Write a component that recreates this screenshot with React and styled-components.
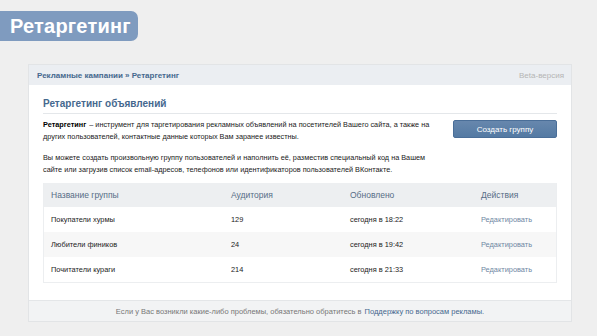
import React from 'react';
import styled, { createGlobalStyle } from 'styled-components';

const Global = createGlobalStyle`
  html, body { margin: 0; padding: 0; }
  body {
    background: #efefef;
    font-family: "Liberation Sans", Arial, sans-serif;
    width: 597px;
    height: 336px;
    overflow: hidden;
  }
`;

const Page = styled.div`
  display: flex;
  flex-direction: column;
  padding-top: 11px;
`;

const Badge = styled.div`
  align-self: flex-start;
  width: 128px;
  height: 30px;
  padding-left: 10px;
  display: flex;
  align-items: center;
  background: #7f9bbf;
  border-radius: 0 7px 7px 0;
  color: #fff;
  font-weight: bold;
  font-size: 20px;
  letter-spacing: 0.2px;
`;

const Panel = styled.div`
  margin: 23px 0 0 28px;
  width: 542px;
  border: 1px solid #e2e4e6;
  background: #fff;
`;

const Crumbs = styled.div`
  height: 20px;
  display: flex;
  align-items: center;
  justify-content: space-between;
  padding: 0 7px 0 8px;
  background: #ebeef2;
  font-size: 8px;
`;

const Path = styled.span`
  color: #45688e;
  font-weight: bold;
`;

const Beta = styled.span`
  color: #b5b5b5;
`;

const Body = styled.div`
  padding: 13px 14px 17px 14px;
`;

const Heading = styled.div`
  color: #45688e;
  font-weight: bold;
  font-size: 10px;
  padding: 0 0 4px 0;
  border-bottom: 1px solid #e4e7ea;
`;

const Intro = styled.div`
  display: flex;
  justify-content: space-between;
  align-items: flex-start;
  margin-top: 5px;
`;

const Text = styled.p`
  margin: ${p => p.$top || 0}px 0 0 0;
  font-size: 7.3px;
  line-height: 12px;
  color: #222;
  width: ${p => p.$width || 400}px;
`;

const Term = styled.b`
  color: #000;
  margin-right: 1px;
`;

const Button = styled.button`
  width: 104px;
  height: 18px;
  margin-top: 1px;
  border: 1px solid #4a6e98;
  border-radius: 2px;
  background: linear-gradient(#6787ad, #547aa3);
  color: #fff;
  font-family: inherit;
  font-size: 8px;
  padding: 0;
`;

const Table = styled.div`
  margin-top: 7px;
  border: 1px solid #eceef0;
  border-top: none;
`;

const Row = styled.div`
  display: grid;
  grid-template-columns: 180px 119px 131px 1fr;
  align-items: center;
  height: ${p => (p.$head ? 24 : 25)}px;
  padding-left: 7px;
  background: ${p => (p.$head ? '#edeff1' : p.$alt ? '#f7f7f7' : '#fff')};
  font-size: ${p => (p.$head ? '8.5px' : '7.4px')};
  color: ${p => (p.$head ? '#566d86' : '#222')};
`;

const Edit = styled.span`
  color: #6f87a3;
`;

const Footer = styled.div`
  height: 20px;
  display: flex;
  align-items: center;
  justify-content: center;
  background: #f2f3f4;
  border-top: 1px solid #e4e6e8;
  font-size: 7.5px;
  color: #777;
`;

const Link = styled.span`
  color: #45688e;
  margin-left: 3px;
`;

const rows = [
  ['Покупатели хурмы', '129', 'сегодня в 18:22'],
  ['Любители фиников', '24', 'сегодня в 19:42'],
  ['Почитатели кураги', '214', 'сегодня в 21:33'],
];

export default function App() {
  return (
    <Page>
      <Global />
      <Badge>Ретаргетинг</Badge>
      <Panel>
        <Crumbs>
          <Path>Рекламные кампании » Ретаргетинг</Path>
          <Beta>Beta-версия</Beta>
        </Crumbs>
        <Body>
          <Heading>Ретаргетинг объявлений</Heading>
          <Intro>
            <Text $width={392}>
              <Term>Ретаргетинг</Term> – инструмент для таргетирования рекламных объявлений на посетителей Вашего сайта, а также на других пользователей, контактные данные которых Вам заранее известны.
            </Text>
            <Button>Создать группу</Button>
          </Intro>
          <Text $top={9} $width={400}>
            Вы можете создать произвольную группу пользователей и наполнить её, разместив специальный код на Вашем сайте или загрузив список email-адресов, телефонов или идентификаторов пользователей ВКонтакте.
          </Text>
          <Table>
            <Row $head>
              <span>Название группы</span>
              <span>Аудитория</span>
              <span>Обновлено</span>
              <span>Действия</span>
            </Row>
            {rows.map((r, i) => (
              <Row key={r[0]} $alt={i === 1}>
                <span>{r[0]}</span>
                <span>{r[1]}</span>
                <span>{r[2]}</span>
                <Edit>Редактировать</Edit>
              </Row>
            ))}
          </Table>
        </Body>
        <Footer>
          Если у Вас возникли какие-либо проблемы, обязательно обратитесь в
          <Link>Поддержку по вопросам рекламы.</Link>
        </Footer>
      </Panel>
    </Page>
  );
}
